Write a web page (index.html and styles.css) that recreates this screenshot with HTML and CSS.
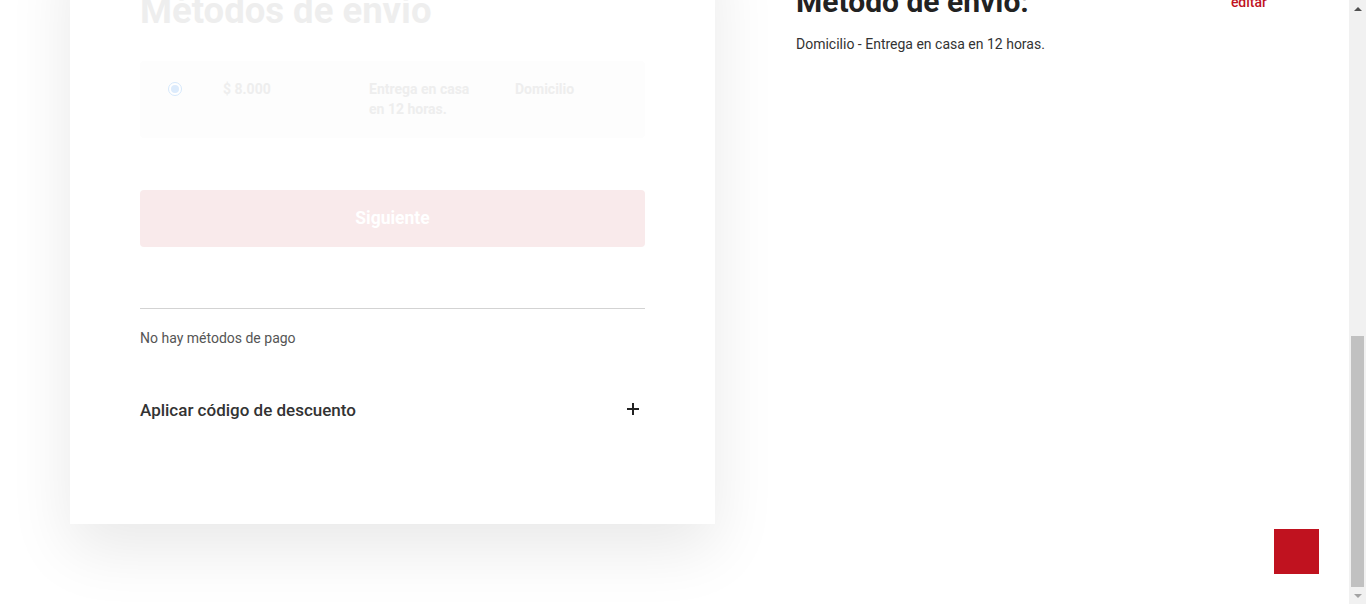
FILE: index.html
```html
<!DOCTYPE html>
<html lang="es">
<head>
<meta charset="utf-8">
<title>Checkout</title>
<link rel="stylesheet" href="styles.css">
</head>
<body>
<div class="viewport">
  <div class="page">
    <div class="layout">
      <section class="card">
        <h2 class="card-title">Métodos de envío</h2>
        <div class="option">
          <span class="radio"><span class="radio-dot"></span></span>
          <span class="opt-col">$ 8.000</span>
          <span class="opt-col opt-desc">Entrega en casa en 12 horas.</span>
          <span class="opt-col">Domicilio</span>
        </div>
        <button class="btn-next" type="button">Siguiente</button>
        <hr class="divider">
        <p class="no-pay">No hay métodos de pago</p>
        <div class="discount">
          <span class="discount-label">Aplicar código de descuento</span>
          <svg class="plus" width="14" height="14" viewBox="0 0 14 14"><path d="M7 1v12M1 7h12" stroke="#222" stroke-width="2" fill="none"/></svg>
        </div>
      </section>
      <aside class="summary">
        <div class="summary-head">
          <h3 class="summary-title">Método de envío:</h3>
          <a class="edit" href="#">editar</a>
        </div>
        <p class="summary-text">Domicilio - Entrega en casa en 12 horas.</p>
      </aside>
    </div>
    <a class="to-top" href="#" aria-label="Volver arriba"></a>
  </div>
  <div class="scrollbar">
    <span class="sb-arrow sb-up"></span>
    <span class="sb-track"><span class="sb-thumb"></span></span>
    <span class="sb-arrow sb-down"></span>
  </div>
</div>
</body>
</html>
```

FILE: styles.css
```css
* { box-sizing: border-box; }
html, body { margin: 0; padding: 0; height: 604px; overflow: hidden; background: #fff; }
body { font-family: Roboto, "Liberation Sans", sans-serif; color: #333; }

.viewport { display: flex; height: 604px; }
.page { flex: 1; position: relative; overflow: hidden; }

.layout { display: flex; gap: 81px; padding-left: 70px; }

.card {
  width: 645px;
  margin-top: -71px;
  padding: 60px 70px 102px;
  background: #fff;
  box-shadow: 0 25px 60px rgba(0,0,0,0.09);
}
.card-title {
  margin: 0 0 29px;
  font-size: 36.5px;
  line-height: 43px;
  font-weight: 700;
  color: #eeeeee;
}

.option {
  display: grid;
  grid-template-columns: 83px 146px 146px 1fr;
  align-items: start;
  padding: 18px 0 19px;
  background: #fdfdfd;
  border-radius: 4px;
  font-size: 14px;
  line-height: 20px;
  font-weight: 700;
  color: #eeeeee;
}
.radio {
  margin: 3px 0 0 28px;
  width: 14px; height: 14px;
  border-radius: 50%;
  border: 1px solid #d6e8fb;
  background: #fff;
  display: flex; align-items: center; justify-content: center;
}
.radio-dot { width: 8px; height: 8px; border-radius: 50%; background: #dcebfc; }
.opt-desc { max-width: 110px; }

.btn-next {
  display: block;
  width: 100%;
  height: 57px;
  margin-top: 52px;
  border: 0;
  border-radius: 4px;
  background: #f9eaeb;
  color: #fff;
  font-family: Roboto, "Liberation Sans", sans-serif;
  font-size: 17.5px;
  line-height: 20px;
  padding: 0 0 2px;
  font-weight: 700;
}

.divider { margin: 61px 0 0; border: 0; border-top: 1px solid #d3d3d3; }

.no-pay { margin: 19px 0 0; font-size: 14px; line-height: 20px; color: #555; }

.discount {
  display: flex; justify-content: space-between; align-items: center;
  margin-top: 50px;
  padding-right: 5px;
}
.discount-label { font-size: 17px; line-height: 24px; font-weight: 500; color: #333; }
.plus { display: block; margin-top: -2px; }

.summary { width: 471px; margin-top: -16px; }
.summary-head { display: flex; justify-content: space-between; align-items: flex-start; }
.summary-title {
  margin: 0;
  font-size: 30px;
  line-height: 36px;
  font-weight: 700;
  color: #222;
}
.edit { margin-top: 10px; font-size: 14px; font-weight: 500; color: #c0121f; text-decoration: none; }
.summary-text { margin: 14px 0 0; font-size: 14px; line-height: 20px; color: #333; }

.to-top {
  position: absolute; right: 30px; bottom: 30px;
  width: 45px; height: 45px; background: #c0121f;
}

.scrollbar {
  width: 17px; background: #f1f1f1;
  display: flex; flex-direction: column; align-items: center;
}
.sb-arrow { width: 17px; height: 17px; display: flex; align-items: center; justify-content: center; flex: none; }
.sb-up::before { content: ""; border: 4px solid transparent; border-bottom: 4px solid #505050; border-top: 0; }
.sb-down::before { content: ""; border: 4px solid transparent; border-top: 4px solid #a3a3a3; border-bottom: 0; }
.sb-track { flex: 1; width: 100%; display: flex; flex-direction: column; justify-content: flex-end; padding: 0 2px 0; }
.sb-thumb { height: 251px; margin-bottom: 0; background: #c1c1c1; }
```
